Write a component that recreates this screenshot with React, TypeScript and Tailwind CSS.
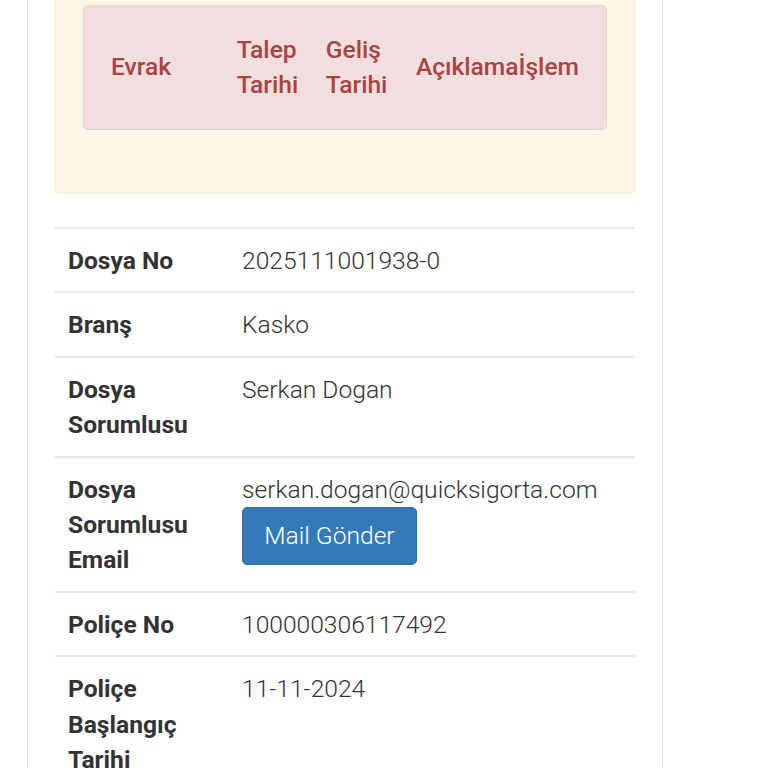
export default function App() {
  const rows: { label: string[]; value: string; button?: boolean }[] = [
    { label: ["Dosya No"], value: "2025111001938-0" },
    { label: ["Branş"], value: "Kasko" },
    { label: ["Dosya", "Sorumlusu"], value: "Serkan Dogan" },
    { label: ["Dosya", "Sorumlusu", "Email"], value: "serkan.dogan@quicksigorta.com", button: true },
    { label: ["Poliçe No"], value: "100000306117492" },
    { label: ["Poliçe", "Başlangıç", "Tarihi"], value: "11-11-2024" },
  ];

  return (
    <main
      className="h-[768px] w-[768px] overflow-hidden bg-white text-[24.6px] leading-[35px] text-[#333]"
      style={{ fontFamily: "Roboto, 'Liberation Sans', sans-serif" }}
    >
      <div className="ml-[27px] flex h-full w-[636px] flex-col border-x border-[#e3e3e3] px-[27px]">
        {/* uyarı kutusu */}
        <div className="-mt-[30px] rounded-b-[4px] border border-[#faf0d4] bg-[#fdf8e5] px-[27px] pt-[34px] pb-[62px] shadow-[0_4px_6px_rgba(0,0,0,0.03)]">
          <div className="flex h-[125px] items-center rounded-[5px] border border-[#ecd2d5] bg-[#f2dede] px-[27px] pb-[2px] font-medium text-[#a94442]">
            <div className="w-[127px]">Evrak</div>
            <div className="w-[90px]">Talep<br />Tarihi</div>
            <div className="w-[91px]">Geliş<br />Tarihi</div>
            <div>Açıklamaİşlem</div>
          </div>
        </div>

        {/* dosya bilgileri */}
        <table className="mt-[34px] w-full border-collapse leading-[35.4px]">
          <tbody>
            {rows.map((r) => (
              <tr key={r.label.join(" ")} className="border-t-2 border-[#e8e8e8]">
                <td className="w-[187px] pt-[14px] pb-[13px] pl-[13px] align-top font-bold">
                  {r.label.map((l, i) => (
                    <div key={i}>{l}</div>
                  ))}
                </td>
                <td className="pt-[14px] pb-[13px] align-top font-light">
                  <div>{r.value}</div>
                  {r.button && (
                    <button className="h-[58px] w-[175px] rounded-[5px] border border-[#2e6da4] bg-[#337ab7] text-[24.6px] font-light text-white">
                      Mail Gönder
                    </button>
                  )}
                </td>
              </tr>
            ))}
          </tbody>
        </table>
      </div>
    </main>
  );
}
